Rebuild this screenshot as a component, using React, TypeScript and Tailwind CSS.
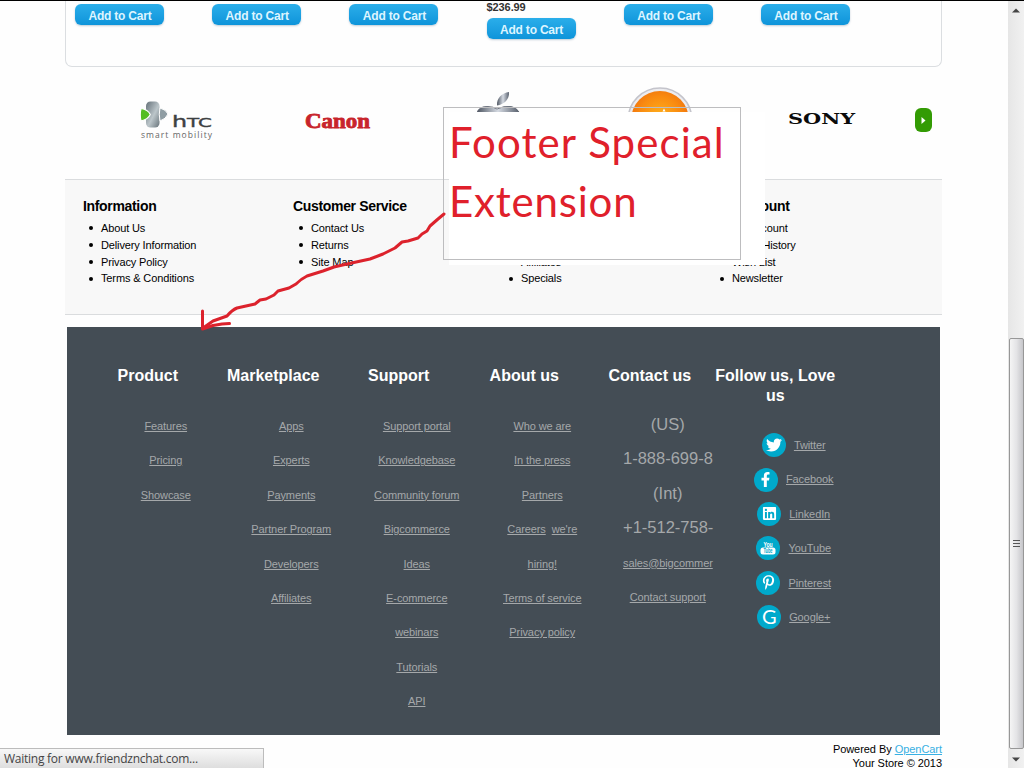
import type { ReactNode } from "react";
import { FaFacebookF, FaLinkedin, FaPinterestP, FaTwitter } from "react-icons/fa";

const sans = "font-['Liberation_Sans',Arial,sans-serif]";

function CartButton() {
  return (
    <button className="block h-[21px] w-[89px] rounded-[6px] bg-linear-to-b from-[#2aaeea] to-[#0d94da] pt-[2px] pl-[1px] text-center text-[12px] leading-[20px] font-bold tracking-[-0.2px] text-[#ddf5ff] shadow-[0_1px_2px_rgba(0,60,100,0.25)]">
      Add to Cart
    </button>
  );
}

function Products() {
  const prices = ["", "", "", "$236.99", "", ""];
  return (
    <section className="ml-[65px] flex h-[66px] w-[877px] rounded-b-[7px] border border-t-0 border-[#dbdee1] pl-[9px]">
      {prices.map((price, i) => (
        <div key={i} className="w-[137.2px] shrink-0">
          {price ? (
            <div className="h-[17px] text-[11px] leading-[13px] font-bold tracking-[-0.1px] text-[#333]">{price}</div>
          ) : (
            <div className="h-[3px]" />
          )}
          <CartButton />
        </div>
      ))}
    </section>
  );
}

function HtcLogo() {
  return (
    <svg className="h-[46px] w-[76px]" viewBox="0 0 76 46">
      <defs>
        <linearGradient id="steel" x1="0" y1="0" x2="1" y2="1">
          <stop offset="0" stopColor="#647078" />
          <stop offset="0.55" stopColor="#bcc6ca" />
          <stop offset="1" stopColor="#68747a" />
        </linearGradient>
      </defs>
      <rect x="6" y="1.500" width="13.500" height="26" rx="4.500" fill="url(#steel)" />
      <path d="M1 8.500q7 1 9.300 6q-2.300 5-9.300 6.500q-1.500-6 0-12.500z" fill="#54bd22" stroke="#fff" strokeWidth="1.200" />
      <path d="M20 8q6 1.500 8 6q-2 5-8 7q-1.500-7 0-13z" fill="#8f9da3" stroke="#fff" strokeWidth="1" />
      <text x="32" y="26.500" textLength="40" lengthAdjust="spacingAndGlyphs" fontSize="15" fill="#3d4042" stroke="#3d4042" strokeWidth="0.350" className="font-['DejaVu_Sans',sans-serif]">
        h<tspan fontSize="12.500">TC</tspan>
      </text>
      <text x="1" y="38" textLength="71" fontSize="8.500" fill="#666" className="font-['Open_Sans',sans-serif]">
        smart mobility
      </text>
    </svg>
  );
}

function AppleLogo() {
  return (
    <svg className="h-[42px] w-[46px]" viewBox="0 0 46 42">
      <defs>
        <linearGradient id="chrome" x1="0" y1="0" x2="1" y2="0">
          <stop offset="0" stopColor="#4d5561" />
          <stop offset="0.5" stopColor="#d5dae2" />
          <stop offset="1" stopColor="#59616e" />
        </linearGradient>
      </defs>
      <path d="M20 14.500C19.500 7 25 2 32 1C32.500 8.500 27 13.500 20 14.500z" fill="url(#chrome)" />
      <path d="M0 21Q3 15 11 15.500Q16 15.500 20 18Q27 14.500 34 15.500Q39 16 42 21V30H0z" fill="url(#chrome)" stroke="#59606c" strokeWidth="0.800" />
    </svg>
  );
}

function OrangeLogo() {
  return (
    <svg className="h-[66px] w-[66px]" viewBox="0 0 66 66">
      <defs>
        <radialGradient id="sun" cx="0.5" cy="0.45" r="0.6">
          <stop offset="0" stopColor="#ffb21e" />
          <stop offset="0.6" stopColor="#f98a10" />
          <stop offset="1" stopColor="#ec6a0c" />
        </radialGradient>
      </defs>
      <circle cx="33" cy="34" r="32" fill="#ececf0" stroke="#c4c4cb" strokeWidth="1.500" />
      <circle cx="33" cy="34" r="29" fill="url(#sun)" />
      <path d="M35.500 25.500l1.500-3l1.500 3z" fill="#fff" />
    </svg>
  );
}

function Brands() {
  return (
    <section className="ml-[65px] flex h-[112px] w-[877px] items-start">
      <div className="ml-[75px] pt-[33px]"><HtcLogo /></div>
      <svg className="mt-[41px] ml-[84px] h-[28px] w-[76px]" viewBox="0 0 76 28">
        <text x="5" y="20" textLength="65" lengthAdjust="spacingAndGlyphs" fontSize="20" fontWeight="700" fill="#c8242b" stroke="#c8242b" strokeWidth="0.800" className="font-['Liberation_Serif',serif]">
          Canon
        </text>
      </svg>
      <div className="ml-[101px] pt-[24px]"><AppleLogo /></div>
      <div className="ml-[104px] pt-[19px]"><OrangeLogo /></div>
      <svg className="mt-[42px] ml-[94px] h-[20px] w-[70px]" viewBox="0 0 70 20">
        <text x="1" y="15" textLength="67" lengthAdjust="spacingAndGlyphs" fontSize="14.500" fontWeight="700" fill="#0b0b0b" className="font-['DejaVu_Serif',serif]">
          SONY
        </text>
      </svg>
      <button className="mt-[41px] ml-[58px] flex h-[24px] w-[17px] items-center justify-center rounded-[6px] bg-[#339b04]">
        <svg className="h-[7px] w-[5px]" viewBox="0 0 5 7"><path d="M0.500 0L4.500 3.500L0.500 7z" fill="#fff" /></svg>
      </button>
    </section>
  );
}

function InfoColumn({ title, items, className = "" }: { title?: string; items: string[]; className?: string }) {
  return (
    <div className={`w-[210px] shrink-0 ${className}`}>
      {title && <h3 className="h-[22px] text-[14px] leading-[16px] font-bold tracking-[-0.33px] whitespace-nowrap">{title}</h3>}
      <ul className="text-[11px] leading-[16.8px] tracking-[-0.13px]">
        {items.map((item) => (
          <li key={item} className="flex items-center whitespace-nowrap">
            <span className="mr-[8px] ml-[6px] h-[4px] w-[4px] rounded-full bg-black" />
            {item}
          </li>
        ))}
      </ul>
    </div>
  );
}

function StoreFooter() {
  return (
    <section className="ml-[65px] flex h-[136px] w-[877px] border-y border-[#dadcde] bg-[#f8f8f8] pt-[18px] pl-[18px] text-black">
      <InfoColumn title="Information" items={["About Us", "Delivery Information", "Privacy Policy", "Terms & Conditions"]} />
      <InfoColumn title="Customer Service" items={["Contact Us", "Returns", "Site Map"]} />
      <InfoColumn className="pt-[55.6px]" items={["Affiliates", "Specials"]} />
      <InfoColumn title="My Account" className="ml-[1px]" items={["My Account", "Order History", "Wish List", "Newsletter"]} />
    </section>
  );
}

function Column({ title, children }: { title: string; children: ReactNode }) {
  return (
    <div className="w-[125.5px] shrink-0">
      <h2 className="text-center text-[16px] leading-[20px] font-bold text-white">{title}</h2>
      {children}
    </div>
  );
}

function LinkList({ items }: { items: string[] }) {
  return (
    <ul className="mt-[23px] pl-[36px] text-center text-[11px] leading-[34.4px] tracking-[-0.1px] whitespace-nowrap">
      {items.map((item) => (
        <li key={item} className="h-[34.4px]">
          {item.split("  ").map((part, i) => (
            <a key={part} className={i ? "ml-[6px] underline" : "underline"}>{part}</a>
          ))}
        </li>
      ))}
    </ul>
  );
}

function YouTubeMark() {
  return (
    <svg className="h-[24px] w-[24px]" viewBox="0 0 24 24">
      <text x="7.500" y="10.500" textLength="9" lengthAdjust="spacingAndGlyphs" fontSize="7" fontWeight="700" fill="#fff">You</text>
      <rect x="4.500" y="11.500" width="15" height="7" rx="2.500" fill="#fff" />
      <text x="7.500" y="17.300" textLength="9" lengthAdjust="spacingAndGlyphs" fontSize="6.500" fontWeight="700" fill="#00a9cb">Tube</text>
    </svg>
  );
}

const social: { name: string; mark: ReactNode }[] = [
  { name: "Twitter", mark: <FaTwitter className="h-[16px] w-[16px]" /> },
  { name: "Facebook", mark: <FaFacebookF className="h-[15px] w-[15px]" /> },
  { name: "LinkedIn", mark: <FaLinkedin className="h-[15px] w-[15px]" /> },
  { name: "YouTube", mark: <YouTubeMark /> },
  { name: "Pinterest", mark: <FaPinterestP className="h-[15px] w-[15px]" /> },
  { name: "Google+", mark: <span className="-mt-[2px] font-['Lato',sans-serif] text-[20px] leading-[20px]">G</span> },
];

function SpecialFooter() {
  return (
    <section className="mt-[12px] ml-[67px] flex h-[408px] w-[873px] bg-[#444d55] pt-[39px] pl-[18px] text-[#a5a8aa]">
      <Column title="Product"><LinkList items={["Features", "Pricing", "Showcase"]} /></Column>
      <Column title="Marketplace"><LinkList items={["Apps", "Experts", "Payments", "Partner Program", "Developers", "Affiliates"]} /></Column>
      <Column title="Support">
        <LinkList items={["Support portal", "Knowledgebase", "Community forum", "Bigcommerce", "Ideas", "E-commerce", "webinars", "Tutorials", "API"]} />
      </Column>
      <Column title="About us">
        <LinkList items={["Who we are", "In the press", "Partners", "Careers  we're", "hiring!", "Terms of service", "Privacy policy"]} />
      </Column>
      <Column title="Contact us">
        <div className="mt-[21px] ml-[36px] text-center whitespace-nowrap">
          <div className="text-[16.5px] leading-[34.4px]">
            <p>(US)</p>
            <p className="text-left">1-888-699-8</p>
            <p>(Int)</p>
            <p className="text-left">+1-512-758-</p>
          </div>
          <div className="pt-[1px] text-[11px] leading-[34.4px] tracking-[-0.1px]">
            <p className="text-left"><a className="underline">sales@bigcommer</a></p>
            <p><a className="underline">Contact support</a></p>
          </div>
        </div>
      </Column>
      <Column title="Follow us, Love us">
        <ul className="mt-[22px] pl-[37px] text-[11px] tracking-[-0.1px]">
          {social.map(({ name, mark }) => (
            <li key={name} className="flex h-[34.4px] items-center justify-center gap-[8px]">
              <span className="flex h-[24px] w-[24px] shrink-0 items-center justify-center rounded-full bg-[#00a9cb] text-white">{mark}</span>
              <a className="underline">{name}</a>
            </li>
          ))}
        </ul>
      </Column>
    </section>
  );
}

function Scrollbar() {
  return (
    <aside className="flex w-[16px] shrink-0 flex-col items-center bg-linear-to-r from-[#e6e6e6] to-[#f1f1f1]">
      <svg className="mt-[7px] h-[5px] w-[8px]" viewBox="0 0 8 5"><path d="M0 4.500L4 0.500L8 4.500z" fill="#444" /></svg>
      <div className="mt-[325px] flex h-[411px] w-[15px] flex-col items-center justify-center gap-[2px] rounded-[2px] border border-[#979797] bg-linear-to-r from-[#f5f5f5] via-[#e4e4e6] to-[#c6c6ca]">
        <span className="h-px w-[7px] bg-[#555]" />
        <span className="h-px w-[7px] bg-[#555]" />
        <span className="h-px w-[7px] bg-[#555]" />
      </div>
      <svg className="mt-[8px] h-[5px] w-[8px]" viewBox="0 0 8 5"><path d="M0 0.500L4 4.500L8 0.500z" fill="#444" /></svg>
    </aside>
  );
}

function Annotation() {
  return (
    <>
      <div className="absolute top-[111px] left-[449px] h-[153px] w-[316px] bg-white" />
      <div className="absolute top-[106px] left-[443px] h-[153px] w-[298px] border border-[#bdbdbf]" />
      <p className="absolute top-[112px] left-[449px] font-['Lato',sans-serif] text-[42px] leading-[59px] tracking-[1.1px] whitespace-nowrap text-[#e0202b]">
        Footer Special
        <br />
        <span className="tracking-[0.8px]">Extension</span>
      </p>
      <svg className="absolute top-[199px] left-[190px] h-[140px] w-[270px]" viewBox="190 200 270 140" fill="none" stroke="#dc222c" strokeWidth="3" strokeLinecap="round" strokeLinejoin="round">
        <path d="M444 214L438 219L430 226L427 231L422 234L418 238L408 241L402 242L395 248L383 254L370 259L347 264L334 267L323 271L307 276Q301 279 296 284L289 288L278 291L274 295L266 299L260 300L255 304L237 308Q232 310 227 316L213 321L203 328" />
        <path d="M202.500 311V329L213 325.500L222 324L229.500 323.500" />
      </svg>
    </>
  );
}

export default function App() {
  return (
    <div className={`relative flex h-[768px] w-[1024px] overflow-hidden border-t border-black bg-[#fefefe] ${sans}`}>
      <main className="w-[1008px] shrink-0">
        <Products />
        <Brands />
        <StoreFooter />
        <SpecialFooter />
        <footer className="mt-[7px] w-[942px] text-right text-[11px] leading-[14px] tracking-[-0.05px] text-black">
          Powered By <a className="text-[#38b0e3] underline">OpenCart</a>
          <br />
          Your Store © 2013
        </footer>
      </main>
      <Scrollbar />
      <div className="absolute bottom-0 left-0 h-[20px] w-[264px] border-t border-r border-[#bcbcbc] bg-linear-to-b from-[#f8f8f8] to-[#dedede] pl-[4px] font-['Open_Sans',sans-serif] text-[12px] leading-[20px] tracking-[-0.25px] text-[#444]">
        Waiting for www.friendznchat.com...
      </div>
      <Annotation />
    </div>
  );
}
